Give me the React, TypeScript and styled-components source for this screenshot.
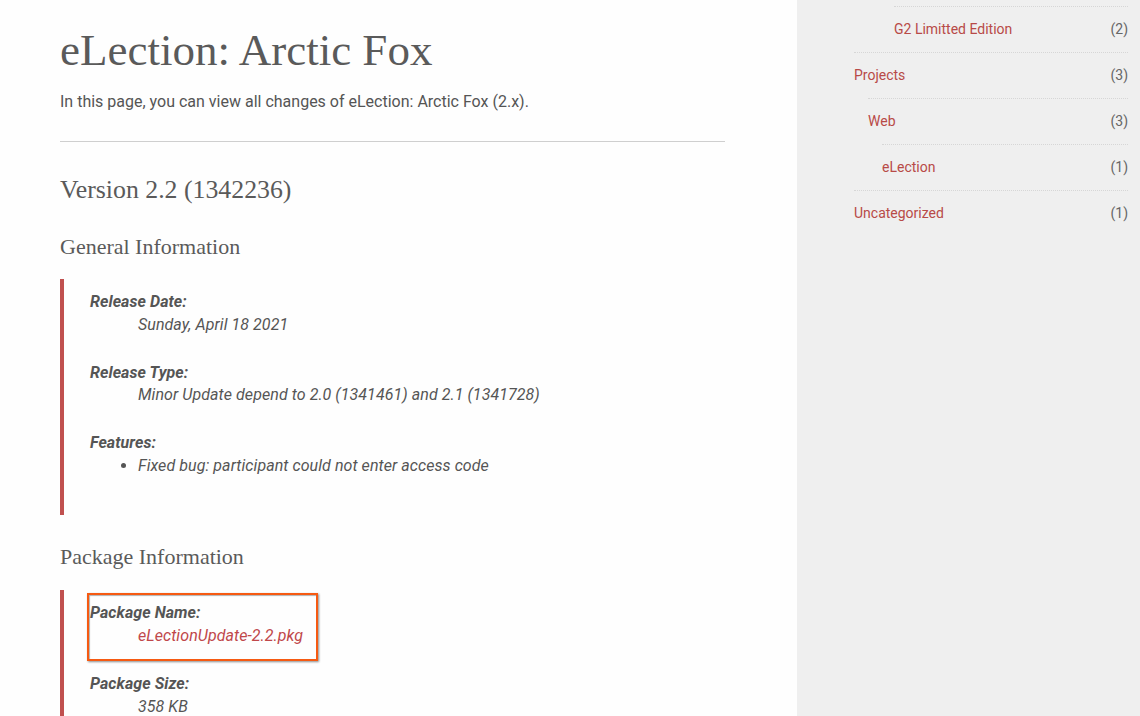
import React from "react";
import styled, { createGlobalStyle } from "styled-components";

const GlobalStyle = createGlobalStyle`
  html, body { margin: 0; padding: 0; background: #fefefe; overflow: hidden; }
  body { font-family: Roboto, "Liberation Sans", sans-serif; color: #555; }
  * { box-sizing: border-box; }
`;

const Page = styled.div`
  display: grid;
  grid-template-columns: 797px 1fr;
  height: 716px;
  overflow: hidden;
`;

const Main = styled.main`
  padding: 0 72px 0 60px;
  background: #fefefe;
`;

const Title = styled.h1`
  margin: 23px 0 0;
  font-family: "Liberation Serif", "Times New Roman", serif;
  font-weight: 400;
  font-size: 45px;
  line-height: 54px;
  color: #5a5a5a;
`;

const Lead = styled.p`
  margin: 13px 0 0;
  font-size: 16px;
  line-height: 24px;
  color: #555;
`;

const Rule = styled.hr`
  margin: 27px 0 0;
  border: 0;
  border-top: 1px solid #cfcfcf;
  height: 0;
`;

const VersionTitle = styled.h2`
  margin: 32.5px 0 0;
  font-family: "Liberation Serif", "Times New Roman", serif;
  font-weight: 400;
  font-size: 25.8px;
  line-height: 30.6px;
  color: #5a5a5a;
`;

const SectionTitle = styled.h3<{ $gap: number }>`
  margin: ${(p) => p.$gap}px 0 0;
  font-family: "Liberation Serif", "Times New Roman", serif;
  font-weight: 400;
  font-size: 22px;
  line-height: 26.4px;
  color: #5a5a5a;
`;

const Quote = styled.blockquote<{ $gap: number }>`
  margin: ${(p) => p.$gap}px 0 0;
  padding: 12.5px 0 12px 26px;
  border-left: 4px solid #c0504f;
`;

const Group = styled.dl`
  position: relative;
  margin: 0 0 24.9px;
  font-size: 16px;
  line-height: 22.8px;
  letter-spacing: 0.07px;
`;

const Label = styled.dt`
  font-weight: 700;
  font-style: italic;
  color: #555;
`;

const Value = styled.dd`
  margin: 0 0 0 48px;
  font-style: italic;
  color: #555;
`;

const FileLink = styled.a`
  color: #c0474a;
  text-decoration: none;
`;

const Bullets = styled.ul`
  margin: 0;
  padding: 0;
  list-style: disc outside;
`;

const Highlight = styled.span`
  position: absolute;
  top: -9px;
  left: -3px;
  width: 231px;
  height: 68px;
  border: 2px solid #f65a12;
  box-shadow: 1px 1px 2px rgba(0, 0, 0, 0.45), inset 1px 1px 1px rgba(0, 0, 0, 0.3);
  pointer-events: none;
`;

const Sidebar = styled.aside`
  background: #efefef;
  padding: 6px 12px 0 57px;
`;

const CatList = styled.ul`
  margin: 0;
  padding: 0;
  list-style: none;
`;

const CatItem = styled.li<{ $indent: number }>`
  display: flex;
  justify-content: space-between;
  margin-left: ${(p) => p.$indent}px;
  padding: 11.5px 0 13.5px;
  border-top: 1px dotted #d6d6d6;
  font-size: 14px;
  line-height: 20px;
`;

const CatLink = styled.a`
  color: #b84a47;
  text-decoration: none;
`;

const CatCount = styled.span`
  color: #666;
`;

const categories = [
  { name: "G2 Limitted Edition", count: 2, indent: 40 },
  { name: "Projects", count: 3, indent: 0 },
  { name: "Web", count: 3, indent: 14 },
  { name: "eLection", count: 1, indent: 28 },
  { name: "Uncategorized", count: 1, indent: 0 },
];

export default function App() {
  return (
    <>
      <GlobalStyle />
      <Page>
        <Main>
          <Title>eLection: Arctic Fox</Title>
          <Lead>In this page, you can view all changes of eLection: Arctic Fox (2.x).</Lead>
          <Rule />
          <VersionTitle>Version 2.2 (1342236)</VersionTitle>
          <SectionTitle $gap={28.5}>General Information</SectionTitle>
          <Quote $gap={18.6}>
            <Group>
              <Label>Release Date:</Label>
              <Value>Sunday, April 18 2021</Value>
            </Group>
            <Group>
              <Label>Release Type:</Label>
              <Value>Minor Update depend to 2.0 (1341461) and 2.1 (1341728)</Value>
            </Group>
            <Group>
              <Label>Features:</Label>
              <Value>
                <Bullets>
                  <li>Fixed bug: participant could not enter access code</li>
                </Bullets>
              </Value>
            </Group>
          </Quote>
          <SectionTitle $gap={29}>Package Information</SectionTitle>
          <Quote $gap={20}>
            <Group>
              <Highlight />
              <Label>Package Name:</Label>
              <Value>
                <FileLink href="#">eLectionUpdate-2.2.pkg</FileLink>
              </Value>
            </Group>
            <Group>
              <Label>Package Size:</Label>
              <Value>358 KB</Value>
            </Group>
          </Quote>
        </Main>
        <Sidebar>
          <CatList>
            {categories.map((c) => (
              <CatItem key={c.name} $indent={c.indent}>
                <CatLink href="#">{c.name}</CatLink>
                <CatCount>({c.count})</CatCount>
              </CatItem>
            ))}
          </CatList>
        </Sidebar>
      </Page>
    </>
  );
}
